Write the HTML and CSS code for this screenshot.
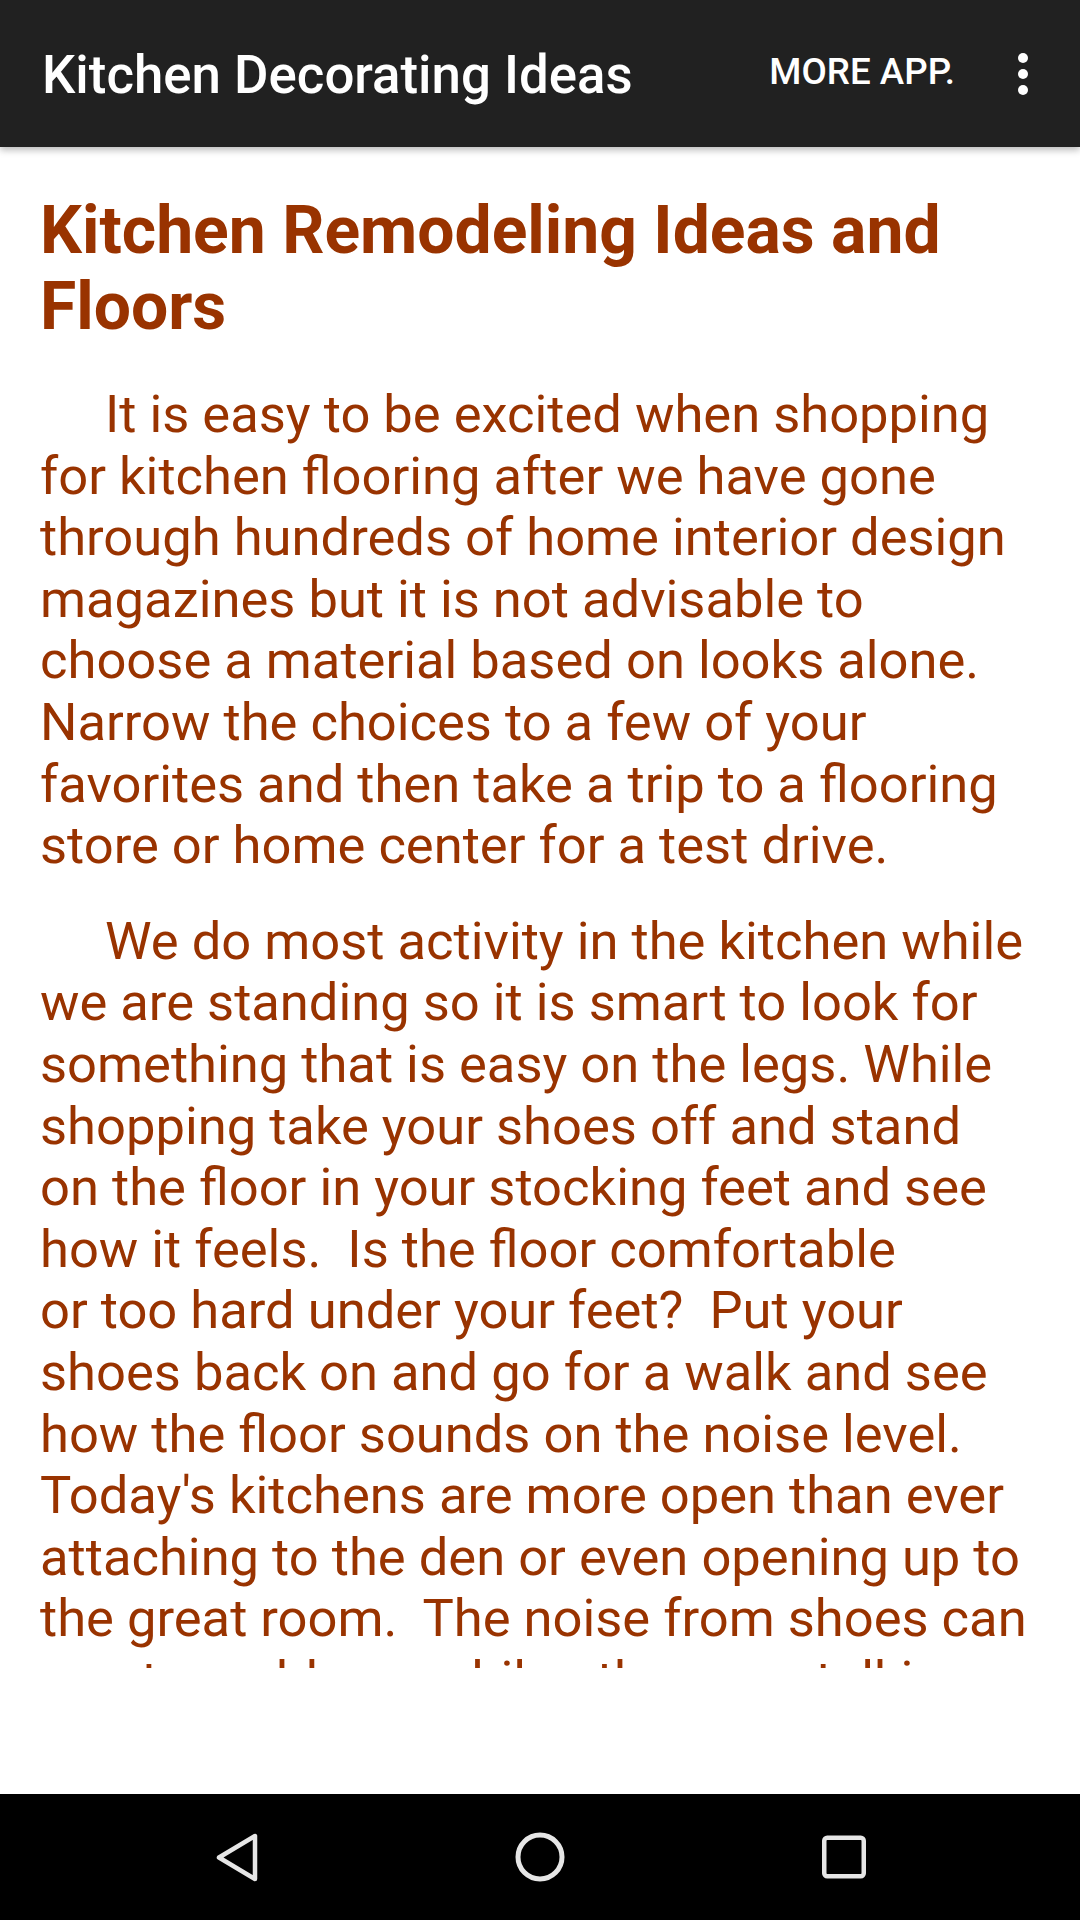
FILE: index.html
```html
<!DOCTYPE html>
<html lang="en">
<head>
<meta charset="utf-8">
<title>Kitchen Decorating Ideas</title>
<link rel="stylesheet" href="styles.css">
</head>
<body>
<div class="screen">
  <header class="appbar">
    <h1 class="appbar-title">Kitchen Decorating Ideas</h1>
    <span class="appbar-action">MORE APP.</span>
    <span class="appbar-overflow" aria-label="More options">
      <span class="dot"></span><span class="dot"></span><span class="dot"></span>
    </span>
  </header>

  <main class="content">
    <h2 class="article-title">Kitchen Remodeling Ideas and Floors</h2>
    <p class="article-text">It is easy to be excited when shopping for kitchen flooring after we have gone through hundreds of home interior design magazines but it is not advisable to choose a material based on looks alone. Narrow the choices to a few of your favorites and then take a trip to a flooring store or home center for a test drive.</p>
    <p class="article-text">We do most activity in the kitchen while we are standing so it is smart to look for something that is easy on the legs. While shopping take your shoes off and stand on the floor in your stocking feet and see how it feels.&nbsp; Is the floor comfortable<br>or too hard under your feet?&nbsp; Put your shoes back on and go for a walk and see how the floor sounds on the noise level. Today's kitchens are more open than ever attaching to the den or even opening up to the great room.&nbsp; The noise from shoes can create problems while others are talking or watching television in the next room.</p>
  </main>

  <div class="ad-space"></div>

  <nav class="navbar">
    <span class="nav-btn">
      <svg class="nav-icon" width="48" height="56" viewBox="0 0 48 56"><polygon points="43,7 43,50 7,28.5" fill="none" stroke="#e6e6e6" stroke-width="4.5" stroke-linejoin="round"/></svg>
    </span>
    <span class="nav-btn">
      <svg class="nav-icon" width="56" height="56" viewBox="0 0 56 56"><circle cx="28" cy="28" r="22" fill="none" stroke="#e6e6e6" stroke-width="5"/></svg>
    </span>
    <span class="nav-btn">
      <svg class="nav-icon" width="56" height="56" viewBox="0 0 56 56"><rect x="8.25" y="8.75" width="39.5" height="38.5" rx="3" fill="none" stroke="#e6e6e6" stroke-width="4.5"/></svg>
    </span>
  </nav>
</div>
</body>
</html>
```

FILE: styles.css
```css
* {
  box-sizing: border-box;
}

html, body {
  margin: 0;
  padding: 0;
  background: #ffffff;
}

body {
  font-family: Roboto, "Liberation Sans", sans-serif;
}

.screen {
  width: 1080px;
  height: 1920px;
  display: flex;
  flex-direction: column;
  overflow: hidden;
  background: #ffffff;
}

/* ---------- App bar ---------- */
.appbar {
  position: relative;
  z-index: 2;
  flex: 0 0 147px;
  height: 147px;
  display: flex;
  align-items: center;
  padding: 4px 0 0 42px;
  background: #212121;
  box-shadow: 0 3px 7px rgba(0, 0, 0, 0.28);
}

.appbar-title {
  flex: 1;
  margin: 0;
  color: #ffffff;
  font-size: 52.8px;
  font-weight: 500;
  line-height: 61px;
  white-space: nowrap;
}

.appbar-action {
  margin-right: 11px;
  color: #ffffff;
  font-size: 36.75px;
  font-weight: 500;
  line-height: 43px;
  margin-bottom: 8px;
}

.appbar-overflow {
  width: 114px;
  display: flex;
  flex-direction: column;
  align-items: center;
  gap: 6px;
  margin-top: -4px;
}

.dot {
  width: 10px;
  height: 10px;
  border-radius: 50%;
  background: #ffffff;
}

/* ---------- Article ---------- */
.content {
  flex: 0 0 1521px;
  height: 1521px;
  overflow: hidden;
  padding: 46px 48px 0 40px;
  color: #993300;
}

.article-title {
  margin: 0 0 39px;
  font-size: 66px;
  font-weight: 700;
  line-height: 76px;
}

.article-text {
  margin: 0 0 34px;
  font-size: 52.5px;
  font-weight: 400;
  line-height: 61.6px;
  text-indent: 65px;
}

/* ---------- Blank banner slot ---------- */
.ad-space {
  flex: 0 0 126px;
  background: #ffffff;
}

/* ---------- System navigation ---------- */
.navbar {
  flex: 0 0 126px;
  display: flex;
  justify-content: center;
  align-items: center;
  gap: 144px;
  background: #000000;
}

.nav-btn {
  width: 160px;
  height: 126px;
  display: flex;
  align-items: center;
  justify-content: center;
}

.nav-icon {
  display: block;
}
```
